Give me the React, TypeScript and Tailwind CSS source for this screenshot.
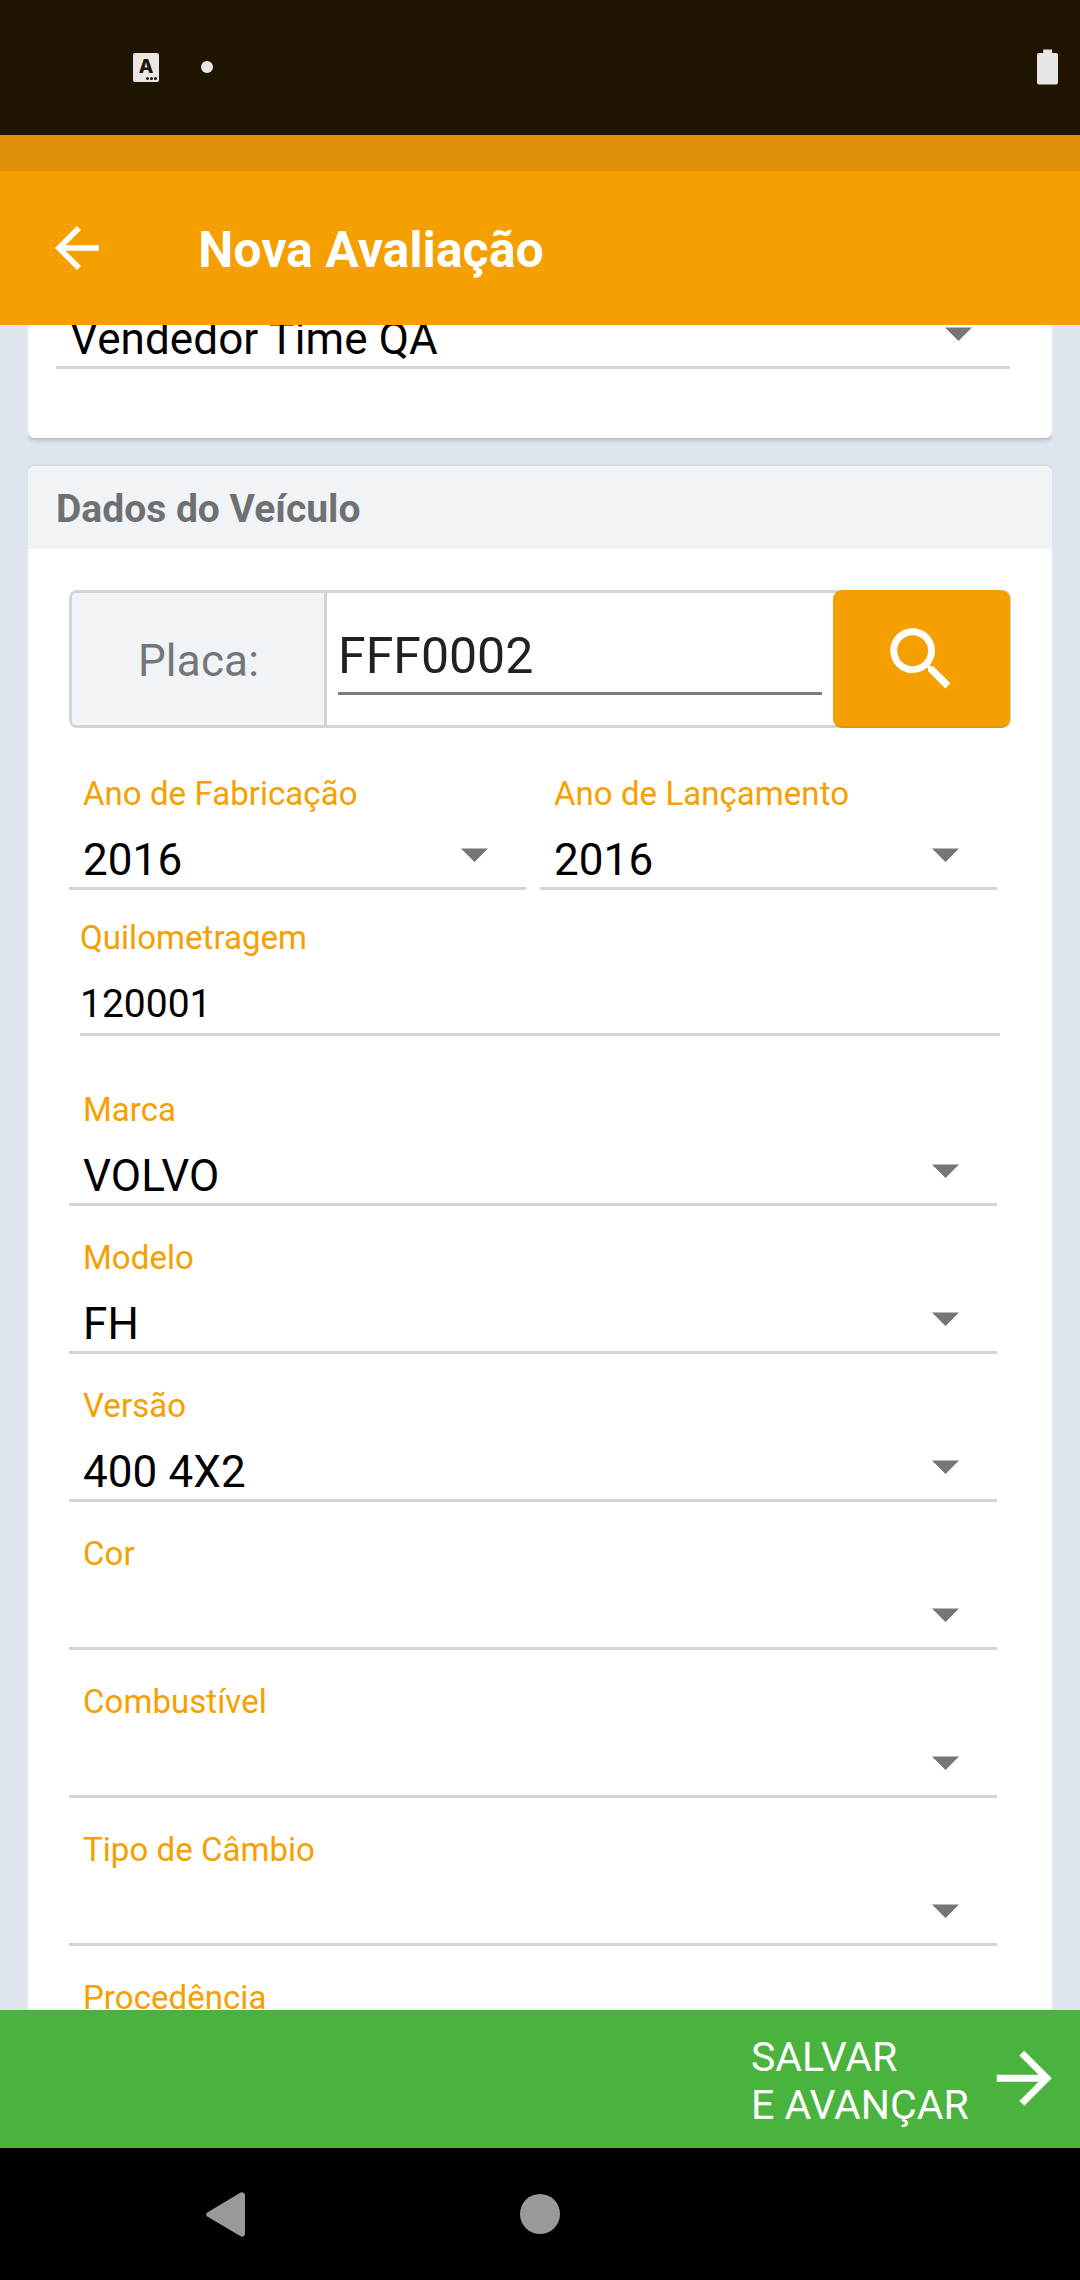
import React from "react";

function Caret() {
  return (
    <svg width="27" height="14" viewBox="0 0 27 14" className="mr-[38.5px] mb-[10px] shrink-0" fill="#757575">
      <path d="M0 .4h27L13.5 14z" />
    </svg>
  );
}

function SelectField({ label, value }: { label?: string; value?: string }) {
  return (
    <div className="flex h-[148px] flex-1 shrink-0 basis-auto flex-col border-b-[3px] border-[#d4d4d4] pt-8">
      <div className="h-10 pl-[14px] text-[33px] leading-[40px] tracking-[0.05px] text-[#f5a000]">{label}</div>
      <div className="mt-5 flex h-[52px] items-center justify-between">
        <div className="pl-[14px] text-[44px] leading-[52px] tracking-[0.08px] text-black">{value}</div>
        <Caret />
      </div>
    </div>
  );
}

function StatusBar() {
  return (
    <div className="flex h-[135px] shrink-0 items-center bg-[#201502] pr-[22px] pb-px pl-[133px]">
      <div className="relative h-[29px] w-[26px] rounded-[2px] bg-[#e8e7e5]">
        <span className="absolute left-0 top-[3px] w-[26px] text-center font-['Inter',sans-serif] text-[19px] leading-[22px] font-extrabold text-[#201502]">
          A
        </span>
        <div className="absolute right-[2px] bottom-[2px] flex gap-[1px]">
          <i className="size-[3px] rounded-full bg-[#201502]" />
          <i className="size-[3px] rounded-full bg-[#201502]" />
          <i className="size-[3px] rounded-full bg-[#201502]" />
        </div>
      </div>
      <div className="ml-[42px] size-3 rounded-full bg-[#e8e7e5]" />
      <svg className="ml-auto" width="21" height="36" viewBox="0 0 21 36" fill="#e8e7e5">
        <path d="M6.2.4h8.9V4H19a2 2 0 0 1 2 2v27.6a2 2 0 0 1-2 2H2a2 2 0 0 1-2-2V6a2 2 0 0 1 2-2h4.200z" />
      </svg>
    </div>
  );
}

const fields: { label: string; value?: string }[] = [
  { label: "Marca", value: "VOLVO" },
  { label: "Modelo", value: "FH" },
  { label: "Versão", value: "400 4X2" },
  { label: "Cor" },
  { label: "Combustível" },
  { label: "Tipo de Câmbio" },
  { label: "Procedência" },
];

const cardShadow = "shadow-[0_2px_5px_rgba(0,0,0,0.2),0_0_2px_rgba(0,0,0,0.12)]";

export default function App() {
  return (
    <div className="flex h-[2280px] w-[1080px] flex-col overflow-hidden bg-[#dee5ed] font-['Roboto',sans-serif]">
      <StatusBar />
      <div className="h-9 shrink-0 bg-[#df9008]" />
      <header className="flex h-[154px] shrink-0 items-center bg-[#f5a000] pl-11">
        <svg width="66" height="66" viewBox="0 0 24 24" fill="#fff">
          <path d="M20 11H7.830l5.590-5.590L12 4l-8 8 8 8 1.410-1.410L7.830 13H20v-2z" />
        </svg>
        <h1 className="ml-[88px] pt-1 text-[50px] leading-[58px] font-bold text-white">Nova Avaliação</h1>
      </header>

      <main className="mx-7 flex min-h-0 flex-1 flex-col overflow-hidden">
        <section className={`-mt-[104px] shrink-0 rounded-[6px] bg-white pr-[42px] pb-[69px] pl-7 ${cardShadow}`}>
          <SelectField value="Vendedor Time QA" />
        </section>

        <section className={`mt-7 shrink-0 rounded-[6px] bg-white ${cardShadow}`}>
          <h2 className="h-[83px] rounded-t-[6px] bg-[#f0f4f7] pt-px pl-7 text-[39px] leading-[84px] font-bold text-[#6f7072]">
            Dados do Veículo
          </h2>
          <div className="pt-[41px] pr-[55px] pl-[41px]">
            <div className="-mr-[14px] flex h-[138px] rounded-[8px] bg-[#d4d4d4]">
              <div className="my-[3px] ml-[3px] flex w-[252px] items-center justify-center rounded-l-[4px] bg-[#f0f4f7] pt-1 pl-px text-[44px] tracking-[0.2px] text-[#757678]">
                Placa:
              </div>
              <div className="my-[3px] ml-[3px] flex-1 bg-white pt-[22px] pr-3 pl-[11px]">
                <div className="h-[80px] border-b-[3px] border-[#7c7c7c] text-[50px] leading-[82px] text-[#212121]">
                  FFF0002
                </div>
              </div>
              <div className="-ml-px mr-px flex bg-[linear-gradient(#d4d4d4_3px,#fff_3px,#fff_135px,#d4d4d4_135px)] bg-[length:20px_138px] bg-no-repeat">
                <button className="flex w-[177px] items-center justify-center rounded-[9px] border-b-2 border-[#e59507] bg-[#f5a000] pt-[2px]">
                  <svg width="82.5" height="82.5" viewBox="0 0 24 24" fill="#fff">
                    <path d="M15.500 14h-.790l-.280-.270C15.410 12.590 16 11.110 16 9.500 16 5.910 13.090 3 9.500 3S3 5.910 3 9.500 5.910 16 9.500 16c1.610 0 3.090-.590 4.230-1.570l.270.280v.790l5 4.990L20.490 19l-4.990-5zm-6 0C7.010 14 5 11.990 5 9.500S7.010 5 9.500 5 14 7.010 14 9.500 11.990 14 9.500 14z" />
                  </svg>
                </button>
              </div>
            </div>

            <div className="mt-[14px] grid grid-cols-2 gap-[14px]">
              <SelectField label="Ano de Fabricação" value="2016" />
              <SelectField label="Ano de Lançamento" value="2016" />
            </div>

            <div className="-mr-[3px] ml-[11px] h-[168px] pt-7">
              <div className="text-[33px] leading-[40px] tracking-[0.05px] text-[#f5a000]">Quilometragem</div>
              <div className="mt-[18px] h-[60px] border-b-[3px] border-[#d4d4d4] text-[39px] leading-[56px] text-black">
                120001
              </div>
            </div>

            {fields.map((f) => (
              <SelectField key={f.label} label={f.label} value={f.value} />
            ))}
          </div>
        </section>
      </main>

      <footer className="flex h-[138px] shrink-0 items-center justify-end bg-[#49b33e] pr-[15px]">
        <div className="mr-[13px] w-[218.5px] pt-[3px] text-[41px] leading-[48px] whitespace-nowrap text-white">
          SALVAR
          <br />E AVANÇAR
        </div>
        <svg width="82.5" height="82.5" viewBox="0 0 24 24" fill="#fff" className="mb-px shrink-0">
          <path d="M12 4l-1.410 1.410L16.170 11H4v2h12.170l-5.580 5.590L12 20l8-8z" />
        </svg>
      </footer>

      <nav className="grid h-[132px] shrink-0 grid-cols-[206px_39px_275px_40px] items-center bg-black">
        <span />
        <svg width="39" height="45" viewBox="0 0 39 45" fill="#999">
          <path d="M1.300 20.600 34.600.600Q36 0 37.500.800 39 1.700 39 3v39q0 1.500-1.400 2.300-1.500.8-3 0L1.300 24.500Q-.9 22.600 1.300 20.600z" />
        </svg>
        <span />
        <div className="size-10 rounded-full bg-[#999]" />
      </nav>
    </div>
  );
}
